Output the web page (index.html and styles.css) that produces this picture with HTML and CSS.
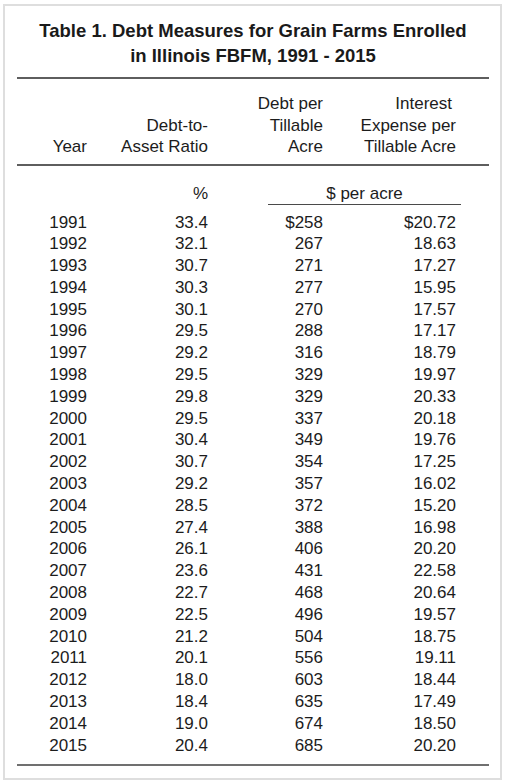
FILE: index.html
```html
<!DOCTYPE html>
<html lang="en">
<head>
<meta charset="utf-8">
<title>Table 1. Debt Measures for Grain Farms</title>
<link rel="stylesheet" href="styles.css">
</head>
<body>
<div class="frame">
  <h1 class="title">Table 1. Debt Measures for Grain Farms Enrolled<br>in Illinois FBFM, 1991 - 2015</h1>
  <div class="table">
    <div class="head">
      <div class="c1">Year</div>
      <div class="c2">Debt-to-<br>Asset Ratio</div>
      <div class="c3">Debt per<br>Tillable<br>Acre</div>
      <div class="c4"><span class="interest">Interest</span><br>Expense per<br>Tillable Acre</div>
    </div>
    <div class="units">
      <div class="u-pct">%</div>
      <div class="u-dollar">$ per acre</div>
    </div>
    <div class="body">
      <div>1991</div><div>33.4</div><div>$258</div><div>$20.72</div>
      <div>1992</div><div>32.1</div><div>267</div><div>18.63</div>
      <div>1993</div><div>30.7</div><div>271</div><div>17.27</div>
      <div>1994</div><div>30.3</div><div>277</div><div>15.95</div>
      <div>1995</div><div>30.1</div><div>270</div><div>17.57</div>
      <div>1996</div><div>29.5</div><div>288</div><div>17.17</div>
      <div>1997</div><div>29.2</div><div>316</div><div>18.79</div>
      <div>1998</div><div>29.5</div><div>329</div><div>19.97</div>
      <div>1999</div><div>29.8</div><div>329</div><div>20.33</div>
      <div>2000</div><div>29.5</div><div>337</div><div>20.18</div>
      <div>2001</div><div>30.4</div><div>349</div><div>19.76</div>
      <div>2002</div><div>30.7</div><div>354</div><div>17.25</div>
      <div>2003</div><div>29.2</div><div>357</div><div>16.02</div>
      <div>2004</div><div>28.5</div><div>372</div><div>15.20</div>
      <div>2005</div><div>27.4</div><div>388</div><div>16.98</div>
      <div>2006</div><div>26.1</div><div>406</div><div>20.20</div>
      <div>2007</div><div>23.6</div><div>431</div><div>22.58</div>
      <div>2008</div><div>22.7</div><div>468</div><div>20.64</div>
      <div>2009</div><div>22.5</div><div>496</div><div>19.57</div>
      <div>2010</div><div>21.2</div><div>504</div><div>18.75</div>
      <div>2011</div><div>20.1</div><div>556</div><div>19.11</div>
      <div>2012</div><div>18.0</div><div>603</div><div>18.44</div>
      <div>2013</div><div>18.4</div><div>635</div><div>17.49</div>
      <div>2014</div><div>19.0</div><div>674</div><div>18.50</div>
      <div>2015</div><div>20.4</div><div>685</div><div>20.20</div>
    </div>
  </div>
</div>
</body>
</html>
```

FILE: styles.css
```css
html, body {
  margin: 0;
  padding: 0;
  background: #ffffff;
}

body {
  font-family: "Liberation Sans", Arial, sans-serif;
  color: #1c1c1c;
}

.frame {
  box-sizing: border-box;
  width: 499px;
  height: 776px;
  margin: 4px 0 0 3px;
  border: 2px solid #dedede;
  padding: 12px 0 0 12px;
}

.title {
  margin: 0;
  width: 472px;
  font-size: 18.5px;
  line-height: 25px;
  font-weight: bold;
  text-align: center;
  color: #1a1a1a;
}

.table {
  width: 472px;
  margin-top: 9px;
  font-size: 17px;
}

.head,
.units,
.body {
  display: grid;
  grid-template-columns: 70px 121px 115px 133px;
}

.head {
  border-top: 2px solid #5e5e5e;
  border-bottom: 2px solid #5e5e5e;
  padding: 14px 0 6px;
  line-height: 21.5px;
  align-items: end;
}

.head > div {
  text-align: right;
}

.c1 { grid-column: 1; }
.c2 { grid-column: 2; }
.c3 { grid-column: 3; }
.c4 { grid-column: 4; }

.interest {
  padding-right: 4px;
}

.units {
  padding-top: 18px;
  line-height: 20px;
}

.u-pct {
  grid-column: 2;
  text-align: right;
}

.u-dollar {
  grid-column: 3 / 5;
  margin: 0 -5px 0 60px;
  text-align: center;
  border-bottom: 1px solid #4a4a4a;
}

.body {
  padding: 7px 0 8px;
  line-height: 21.8px;
  border-bottom: 2px solid #707070;
}

.body > div {
  text-align: right;
}
```
